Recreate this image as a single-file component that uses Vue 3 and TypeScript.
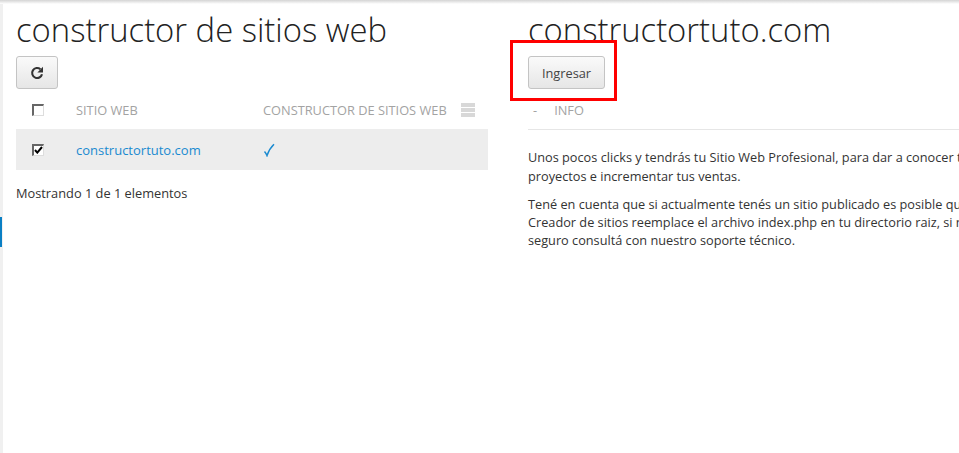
<script setup lang="ts">
const paragraphs = [
  ['Unos pocos clicks y tendrás tu Sitio Web Profesional, para dar a conocer tus', 'proyectos e incrementar tus ventas.'],
  [
    'Tené en cuenta que si actualmente tenés un sitio publicado es posible que el',
    'Creador de sitios reemplace el archivo index.php en tu directorio raiz, si no estás',
    'seguro consultá con nuestro soporte técnico.',
  ],
]
</script>

<template>
  <div class="page">
    <aside class="rail"><span class="rail-mark"></span></aside>
    <main class="content">
      <section class="list">
        <h1>constructor de sitios web</h1>
        <button class="btn btn-icon" aria-label="Recargar">
          <svg width="14" height="14" viewBox="0 0 14 14" fill="none">
            <path d="M12 8.2A5 5 0 1 1 10.4 3.2" stroke="#333" stroke-width="2.1" />
            <path d="M13 .8v5.6H7.4z" fill="#333" />
          </svg>
        </button>
        <div class="row head">
          <span class="cell-check"><span class="check"></span></span>
          <span class="cell-name">SITIO WEB</span>
          <span class="cell-flag">CONSTRUCTOR DE SITIOS WEB</span>
          <span class="columns"><i></i><i></i><i></i></span>
        </div>
        <div class="row item">
          <span class="cell-check">
            <span class="check">
              <svg width="9" height="8" viewBox="0 0 9 8" fill="none">
                <path d="M1 4l2.3 2.6L8 1" stroke="#000" stroke-width="2" />
              </svg>
            </span>
          </span>
          <a class="cell-name link">constructortuto.com</a>
          <span class="cell-flag tick">
            <svg width="12" height="14" viewBox="0 0 12 14" fill="none">
              <path d="M1.5 8.5C2.6 9.6 3.4 11 4 12.6 5.4 8.4 7.6 4.4 11 1.2" stroke="#1a8ad0" stroke-width="1.5" />
            </svg>
          </span>
        </div>
        <p class="count">Mostrando 1 de 1 elementos</p>
      </section>

      <section class="detail">
        <h1>constructortuto.com</h1>
        <button class="btn btn-text">Ingresar</button>
        <div class="tabs">
          <span class="dash">-</span>
          <span>INFO</span>
        </div>
        <div class="copy">
          <p v-for="(lines, i) in paragraphs" :key="i">
            <span v-for="line in lines" :key="line" class="line">{{ line }}</span>
          </p>
        </div>
      </section>
    </main>
    <div class="highlight"></div>
  </div>
</template>

<style>
html,
body {
  margin: 0;
  background: #fff;
  overflow: hidden;
}
</style>

<style scoped>
.page {
  position: relative;
  display: flex;
  width: 959px;
  height: 453px;
  overflow: hidden;
  background: #fff;
  font-family: 'Open Sans', 'Liberation Sans', sans-serif;
  font-size: 12.8px;
  color: #333;
}

.page::before {
  content: '';
  position: absolute;
  inset: 0 0 auto 0;
  height: 4px;
  background: linear-gradient(#d4d4d4, #fff);
}

.rail {
  flex: 0 0 3px;
  background: #f0f0f0;
  padding-top: 217px;
}

.rail-mark {
  display: block;
  width: 2px;
  height: 30px;
  background: #0a7fc4;
}

.content {
  display: flex;
  flex: 1;
  gap: 40px;
  padding: 12px 0 0 13px;
  min-width: 0;
}

h1 {
  margin: 0 0 8px;
  font-size: 32.8px;
  font-weight: 300;
  line-height: 36px;
  color: #222;
  white-space: nowrap;
}

.list {
  flex: 0 0 472px;
}

.detail {
  flex: 1;
  min-width: 0;
}

.btn {
  display: block;
  height: 33px;
  padding: 0;
  border: 1px solid #c4c4c4;
  border-radius: 3px;
  background: linear-gradient(#fafafa, #e6e6e6);
  font: inherit;
  color: #444;
}

.btn-icon {
  width: 42px;
}

.btn-icon svg {
  display: block;
  margin: 0 auto;
}

.btn-text {
  width: 77px;
}

.row {
  display: flex;
  align-items: center;
}

.head {
  height: 40px;
  padding-top: 2px;
  box-sizing: border-box;
  color: #a3a3a3;
}

.item {
  height: 41px;
  background: #ededed;
}

.cell-check {
  flex: 0 0 60px;
  padding-left: 16px;
  box-sizing: border-box;
}

.check {
  display: flex;
  align-items: center;
  justify-content: center;
  width: 12px;
  height: 12px;
  box-sizing: border-box;
  border: 2px solid #666;
  border-right: 1px solid #ddd;
  border-bottom: 1px solid #ddd;
  background: #fff;
}

.cell-name {
  flex: 0 0 187px;
}

.link {
  color: #1a8ad0;
  font-size: 13px;
}

.cell-flag {
  flex: 0 0 198px;
}

.tick svg {
  display: block;
}

.columns {
  display: flex;
  flex-direction: column;
  gap: 1px;
  width: 14px;
}

.columns i {
  display: block;
  height: 4px;
  background: #d8d8d8;
}

.count {
  margin: 14px 0 0;
  line-height: 18px;
}

.tabs {
  display: flex;
  align-items: center;
  gap: 17px;
  height: 41px;
  padding: 2px 0 1px 5px;
  box-sizing: border-box;
  border-bottom: 1px solid #e6e6e6;
  color: #a3a3a3;
}

.copy {
  padding-top: 18px;
  white-space: nowrap;
  font-size: 12.72px;
}

.copy p {
  margin: 0 0 9px;
  line-height: 18px;
}

.copy p:first-child {
  line-height: 19px;
}

.line {
  display: block;
}

.highlight {
  position: absolute;
  left: 510px;
  top: 40px;
  width: 107px;
  height: 61px;
  box-sizing: border-box;
  border: 3px solid #f00;
}
</style>
